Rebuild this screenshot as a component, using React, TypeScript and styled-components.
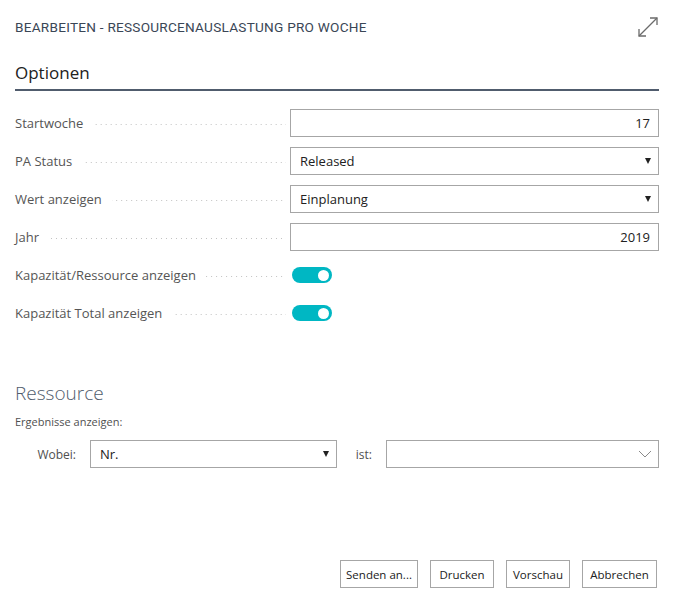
import React from 'react'
import styled, { createGlobalStyle } from 'styled-components'

const GlobalStyle = createGlobalStyle`
  html, body {
    margin: 0;
    padding: 0;
    background: #ffffff;
  }
  body {
    font-family: 'Segoe UI', 'Open Sans', 'Noto Sans', sans-serif;
    color: #505050;
  }
  * {
    box-sizing: border-box;
  }
`

const Page = styled.div`
  display: flex;
  flex-direction: column;
  min-height: 603px;
  padding: 0 15px 15px 15px;
`

const Header = styled.div`
  display: flex;
  align-items: center;
  justify-content: space-between;
  height: 52px;
  padding-top: 2px;
`

const Title = styled.div`
  font-family: Roboto, 'Liberation Sans', sans-serif;
  font-size: 13.6px;
  color: #3a4656;
  letter-spacing: 0.25px;
  text-transform: uppercase;
`

const ExpandButton = styled.div`
  width: 22px;
  height: 22px;
  display: flex;
  align-items: center;
  justify-content: center;
`

const SectionHeading = styled.div`
  margin-top: 9px;
  font-size: 17px;
  color: #212121;
  padding-bottom: 4px;
  border-bottom: 2px solid #505c6d;
  line-height: 24px;
`

const Fields = styled.div`
  display: flex;
  flex-direction: column;
  gap: 10px;
  margin-top: 18px;
`

const FieldRow = styled.div`
  display: grid;
  grid-template-columns: 275px 1fr;
  height: 28px;
  align-items: center;
`

const LabelCell = styled.div`
  display: flex;
  align-items: center;
  font-size: 13px;
  color: #555555;
  padding-right: 4px;
`

const Dots = styled.span`
  flex: 1;
  height: 1px;
  margin-left: 10px;
  margin-top: 3px;
  background-image: linear-gradient(to right, #c2c2c2 1px, transparent 1px);
  background-size: 5px 1px;
  background-repeat: repeat-x;
  background-position: right center;
`

const Box = styled.div<{ $align?: 'left' | 'right' }>`
  height: 28px;
  border: 1px solid #a6a6a6;
  display: flex;
  align-items: center;
  justify-content: ${(p) => (p.$align === 'right' ? 'flex-end' : 'space-between')};
  padding: 0 8px 0 9px;
  font-size: 13px;
  color: #212121;
  background: #ffffff;
`

const Caret = styled.span`
  width: 0;
  height: 0;
  border-left: 3.5px solid transparent;
  border-right: 3.5px solid transparent;
  border-top: 6px solid #212121;
  margin-right: -1px;
`

const Toggle = styled.div<{ $on: boolean }>`
  width: 40px;
  height: 16px;
  margin-left: 2px;
  border-radius: 8px;
  background: ${(p) => (p.$on ? '#00b7c3' : '#c8c8c8')};
  display: flex;
  align-items: center;
  justify-content: ${(p) => (p.$on ? 'flex-end' : 'flex-start')};
  padding: 0 3px;
`

const Knob = styled.span`
  width: 11px;
  height: 11px;
  border-radius: 50%;
  background: #ffffff;
`

const SubHeading = styled.div`
  margin-top: 53px;
  font-size: 19px;
  color: #505c6d;
  line-height: 26px;
  font-weight: 300;
`

const Hint = styled.div`
  margin-top: 8px;
  font-size: 11px;
  color: #505050;
`

const FilterRow = styled.div`
  display: flex;
  align-items: center;
  margin-top: 11px;
  height: 28px;
`

const FilterLabel = styled.div<{ $width: number }>`
  width: ${(p) => p.$width}px;
  font-size: 12px;
  color: #505050;
  text-align: right;
  padding-right: 14px;
`

const FilterBox = styled(Box)<{ $width?: number }>`
  ${(p) => (p.$width ? `width: ${p.$width}px;` : 'flex: 1;')}
`

const Footer = styled.div`
  margin-top: auto;
  display: flex;
  justify-content: flex-end;
  gap: 12px;
  padding-right: 2px;
`

const Button = styled.button<{ $width: number }>`
  width: ${(p) => p.$width}px;
  height: 28px;
  border: 1px solid #a6a6a6;
  background: #ffffff;
  font-family: inherit;
  font-size: 11.5px;
  color: #212121;
  padding: 0;
  cursor: pointer;
`

const ExpandIcon = () => (
  <svg width="22" height="22" viewBox="0 0 22 22" fill="none" stroke="#6b6b6b" strokeWidth="1.3">
    <path d="M2 20 L20 2" />
    <path d="M13 2 H20 V9" />
    <path d="M2 13 V20 H9" />
  </svg>
)

const ChevronDown = () => (
  <svg width="14" height="8" viewBox="0 0 14 8" fill="none" stroke="#8a8a8a" strokeWidth="1">
    <path d="M1 1 L7 7 L13 1" />
  </svg>
)

interface IField {
  label: string
  kind: 'number' | 'select' | 'toggle'
  value?: string
  on?: boolean
}

const fields: IField[] = [
  { label: 'Startwoche', kind: 'number', value: '17' },
  { label: 'PA Status', kind: 'select', value: 'Released' },
  { label: 'Wert anzeigen', kind: 'select', value: 'Einplanung' },
  { label: 'Jahr', kind: 'number', value: '2019' },
  { label: 'Kapazität/Ressource anzeigen', kind: 'toggle', on: true },
  { label: 'Kapazität Total anzeigen', kind: 'toggle', on: true },
]

const buttons = [
  { label: 'Senden an...', width: 78 },
  { label: 'Drucken', width: 64 },
  { label: 'Vorschau', width: 64 },
  { label: 'Abbrechen', width: 75 },
]

const App = () => {
  return (
    <>
      <GlobalStyle />
      <Page>
        <Header>
          <Title>Bearbeiten - Ressourcenauslastung pro Woche</Title>
          <ExpandButton>
            <ExpandIcon />
          </ExpandButton>
        </Header>
        <SectionHeading>Optionen</SectionHeading>
        <Fields>
          {fields.map((f) => (
            <FieldRow key={f.label}>
              <LabelCell>
                {f.label}
                <Dots />
              </LabelCell>
              {f.kind === 'number' && <Box $align="right">{f.value}</Box>}
              {f.kind === 'select' && (
                <Box>
                  {f.value}
                  <Caret />
                </Box>
              )}
              {f.kind === 'toggle' && (
                <Toggle $on={!!f.on}>
                  <Knob />
                </Toggle>
              )}
            </FieldRow>
          ))}
        </Fields>
        <SubHeading>Ressource</SubHeading>
        <Hint>Ergebnisse anzeigen:</Hint>
        <FilterRow>
          <FilterLabel $width={75}>Wobei:</FilterLabel>
          <FilterBox $width={247}>
            Nr.
            <Caret />
          </FilterBox>
          <FilterLabel $width={49}>ist:</FilterLabel>
          <FilterBox style={{ paddingRight: 6 }}>
            <span />
            <ChevronDown />
          </FilterBox>
        </FilterRow>
        <Footer>
          {buttons.map((b) => (
            <Button key={b.label} $width={b.width}>
              {b.label}
            </Button>
          ))}
        </Footer>
      </Page>
    </>
  )
}

export default App
